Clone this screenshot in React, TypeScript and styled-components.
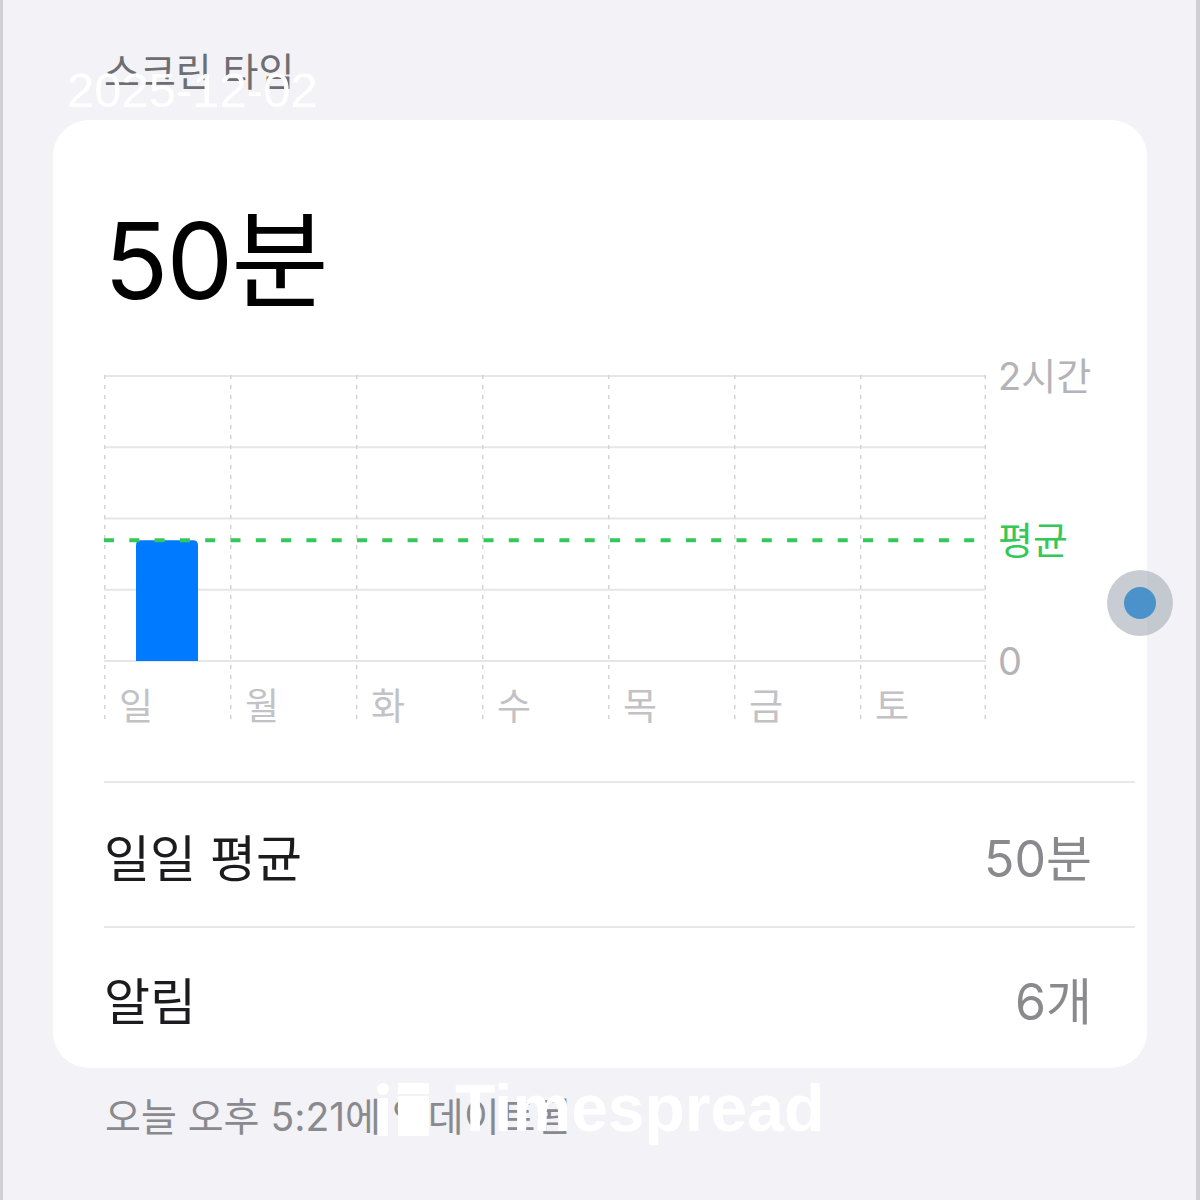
import React from "react";
import styled, { createGlobalStyle } from "styled-components";

const GlobalStyle = createGlobalStyle`
  html, body { margin: 0; padding: 0; background: #f2f2f7; }
  body { font-family: Inter, "Noto Sans CJK KR", sans-serif; }
`;

const FONT = `Inter, "Noto Sans CJK KR", sans-serif`;

const Page = styled.div`
  position: relative;
  width: 1200px;
  height: 1200px;
  box-sizing: border-box;
  background: #f2f2f7;
  border-left: 3px solid #cfcfd4;
  border-right: 4px solid #cfcfd4;
  padding-left: 50px;
  overflow: hidden;
  font-family: ${FONT};
`;

const SectionTitle = styled.div`
  padding-top: 50px;
  margin-left: 51px;
  height: 44px;
  line-height: 44px;
  font-size: 39px;
  color: #6d6d72;
  margin-bottom: 26px;
`;

const Card = styled.div`
  width: 1094px;
  height: 948px;
  box-sizing: border-box;
  background: #ffffff;
  border-radius: 36px;
  padding: 0 12px 0 51px;
  display: flex;
  flex-direction: column;
`;

const Total = styled.div`
  margin-top: 81px;
  height: 120px;
  line-height: 120px;
  font-size: 106px;
  color: #000;
  letter-spacing: -2px;
`;

const Chart = styled.div`
  margin-top: 54px;
  display: grid;
  grid-template-columns: 882px 1fr;
  column-gap: 12px;
  height: 350px;
`;

const PlotStack = styled.div`
  display: grid;
  width: 882px;
  height: 350px;
  & > * {
    grid-area: 1 / 1;
  }
`;

const DayRow = styled.div`
  align-self: end;
  display: grid;
  grid-template-columns: repeat(7, 126px);
  height: 36px;
`;

const DayLabel = styled.span`
  padding-left: 15px;
  line-height: 36px;
  font-size: 37px;
  color: #c2c2c6;
`;

const AxisCol = styled.div`
  position: relative;
  height: 350px;
`;

const AxisLabel = styled.span<{ $accent?: boolean }>`
  position: absolute;
  left: 0;
  height: 44px;
  line-height: 44px;
  font-size: 38px;
  white-space: nowrap;
  color: ${(p) => (p.$accent ? "#34c759" : "#b3b3b8")};
`;

const Separator = styled.div<{ $top?: number }>`
  height: 2px;
  background: #e8e8ec;
  margin-top: ${(p) => p.$top ?? 0}px;
`;

const StatRow = styled.div<{ $h: number }>`
  height: ${(p) => p.$h}px;
  display: flex;
  align-items: center;
  justify-content: space-between;
  padding-right: 43px;
  font-size: 50px;
`;

const StatLabel = styled.span`
  color: #1c1c1e;
`;

const StatValue = styled.span`
  color: #8a8a8e;
`;

const Footer = styled.div`
  margin-top: 27px;
  margin-left: 52px;
  height: 44px;
  line-height: 44px;
  font-size: 39px;
  color: #8a8a8e;
`;

const DateStamp = styled.div`
  position: absolute;
  left: 64px;
  top: 62px;
  font-family: "Liberation Sans", Arial, sans-serif;
  font-size: 49px;
  line-height: 56px;
  color: rgba(255, 255, 255, 0.97);
`;

const Watermark = styled.div`
  position: absolute;
  left: 374px;
  top: 1078px;
  display: flex;
  align-items: flex-start;
  gap: 22px;
  color: #ffffff;
`;

const WatermarkText = styled.span`
  font-family: "Liberation Sans", Arial, sans-serif;
  font-weight: 700;
  font-size: 66px;
  line-height: 60px;
`;

const Pointer = styled.div`
  position: absolute;
  left: 1104px;
  top: 570px;
  width: 66px;
  height: 66px;
  border-radius: 50%;
  background: rgba(170, 178, 188, 0.65);
  display: flex;
  align-items: center;
  justify-content: center;
`;

const PointerDot = styled.div`
  width: 32px;
  height: 32px;
  border-radius: 50%;
  background: #4b92cb;
`;

const days = ["일", "월", "화", "수", "목", "금", "토"];
const minutes = [50, 0, 0, 0, 0, 0, 0];
const average = 50;
const maxMinutes = 120;

const W = 882;
const TOP = 1;
const BOTTOM = 286;
const y = (v: number) => TOP + (1 - v / maxMinutes) * (BOTTOM - TOP);

function Plot() {
  const colW = W / 7;
  const barW = 62;
  const r = 5;
  const avgY = y(average) - 2;
  return (
    <svg width={W} height={350} viewBox={`0 0 ${W} 350`}>
      {[0, 30, 60, 90, 120].map((v) => (
        <line key={v} x1={0} x2={W} y1={y(v)} y2={y(v)} stroke="#e6e6ea" strokeWidth={2} />
      ))}
      {Array.from({ length: 8 }).map((_, i) => {
        const x = i === 7 ? W - 0.75 : i * colW + 0.75;
        return (
          <line
            key={i}
            x1={x}
            x2={x}
            y1={0}
            y2={350}
            stroke="#d4d4d8"
            strokeWidth={1.5}
            strokeDasharray="4 6"
          />
        );
      })}
      {minutes.map((m, i) => {
        if (m <= 0) return null;
        const x0 = i * colW + (colW - barW) / 2;
        const x1 = x0 + barW;
        const top = y(m) - 2;
        const b = y(0);
        return (
          <path
            key={i}
            d={`M${x0} ${b} L${x0} ${top + r} Q${x0} ${top} ${x0 + r} ${top} L${x1 - r} ${top} Q${x1} ${top} ${x1} ${top + r} L${x1} ${b} Z`}
            fill="#007aff"
          />
        );
      })}
      <line
        x1={0}
        x2={W - 4}
        y1={avgY}
        y2={avgY}
        stroke="#34c759"
        strokeWidth={4}
        strokeDasharray="10 15.3"
      />
    </svg>
  );
}

function Logo() {
  return (
    <svg width="56" height="58" viewBox="0 0 56 58" style={{ marginTop: 3 }}>
      <circle cx="6" cy="8" r="6" fill="#fff" />
      <rect x="1" y="17" width="10" height="38" fill="#fff" />
      <rect x="21" y="2" width="31" height="11" fill="#fff" />
      <rect x="21" y="15" width="31" height="40" fill="#fff" />
    </svg>
  );
}

export default function App() {
  return (
    <>
      <GlobalStyle />
      <Page>
        <SectionTitle>스크린 타임</SectionTitle>
        <Card>
          <Total>50분</Total>
          <Chart>
            <PlotStack>
              <Plot />
              <DayRow>
                {days.map((d) => (
                  <DayLabel key={d}>{d}</DayLabel>
                ))}
              </DayRow>
            </PlotStack>
            <AxisCol>
              <AxisLabel style={{ top: y(120) - 22 }}>2시간</AxisLabel>
              <AxisLabel $accent style={{ top: y(average) - 24 }}>
                평균
              </AxisLabel>
              <AxisLabel style={{ top: y(0) - 22 }}>0</AxisLabel>
            </AxisCol>
          </Chart>
          <Separator $top={56} />
          <StatRow $h={143}>
            <StatLabel>일일 평균</StatLabel>
            <StatValue>50분</StatValue>
          </StatRow>
          <Separator />
          <StatRow $h={140}>
            <StatLabel>알림</StatLabel>
            <StatValue>6개</StatValue>
          </StatRow>
        </Card>
        <Footer>오늘 오후 5:21에 업데이트됨</Footer>
        <DateStamp>2025-12-02</DateStamp>
        <Watermark>
          <Logo />
          <WatermarkText>Timespread</WatermarkText>
        </Watermark>
        <Pointer>
          <PointerDot />
        </Pointer>
      </Page>
    </>
  );
}
